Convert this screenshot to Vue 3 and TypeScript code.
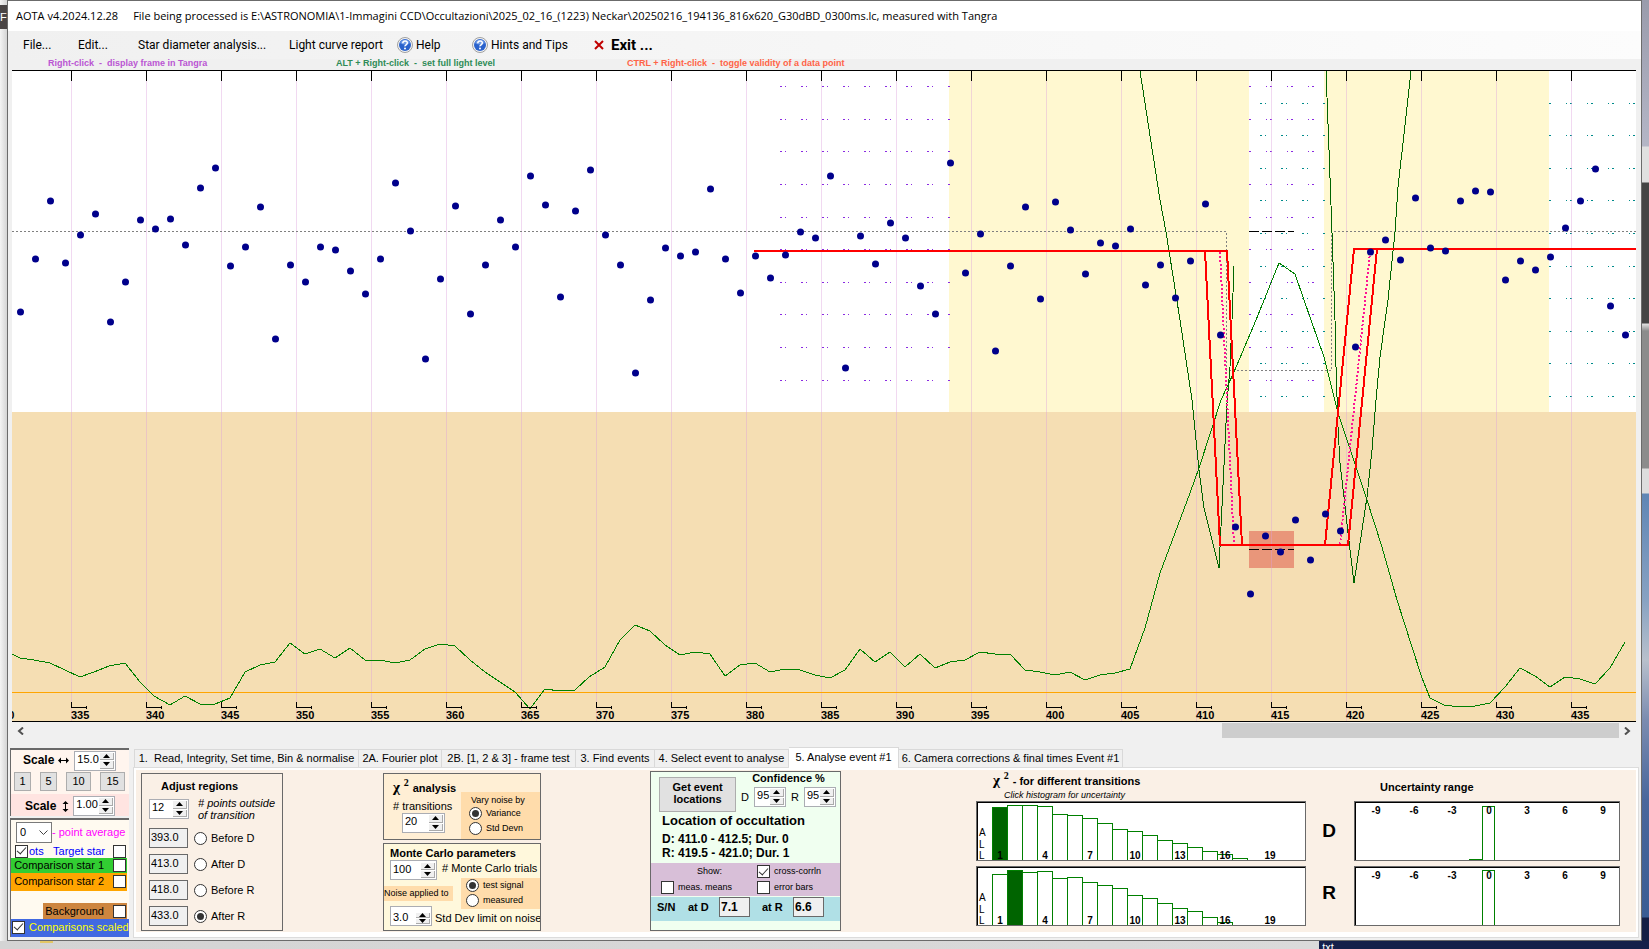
<script setup lang="ts">
import { h, ref } from 'vue'

const Spin = (props: { value: string; label: string }) =>
  h('span', { class: 'spin' }, [
    h('input', { type: 'text', value: props.value, 'aria-label': props.label }),
    h('span', { class: 'arrows' }, [
      h('button', { type: 'button', 'aria-label': props.label + ' up' }, [
        h('svg', { viewBox: '0 0 7 4', width: 7, height: 4 }, [h('path', { d: 'M0 4L3.5 0L7 4Z' })]),
      ]),
      h('button', { type: 'button', 'aria-label': props.label + ' down' }, [
        h('svg', { viewBox: '0 0 7 4', width: 7, height: 4 }, [h('path', { d: 'M0 0L3.5 4L7 0Z' })]),
      ]),
    ]),
  ])
Spin.props = ['value', 'label']

const pointHeights: number[] = [
  312, 259, 201, 263, 235, 214, 322, 282, 220, 229, 219, 245, 188, 168, 266, 247, 207, 339, 265, 282,
  247, 250, 271, 294, 259, 183, 231, 359, 279, 206, 314, 265, 220, 247, 176, 205, 297, 211, 170, 235,
  265, 373, 300, 248, 256, 252, 189, 259, 293, 256, 278, 255, 232, 238, 176, 368, 236, 264, 223, 238,
  286, 314, 163, 273, 234, 351, 266, 207, 299, 202, 230, 274, 243, 246, 229, 285, 265, 298, 261, 204,
  335, 527, 594, 536, 552, 520, 560, 514, 531, 347, 252, 240, 260, 198, 248, 251, 201, 191, 192, 280,
  261, 270, 257, 228, 201, 169, 306, 335,
]
const points = pointHeights.map((y, i) => ({ x: 20 + i * 15, y }))

const frames = Array.from({ length: 22 }, (_, i) => 330 + i * 5)
const frameX = (n: number) => 71 + (n - 335) * 15

const purpleRows = [86, 119, 151, 184, 217, 249, 282, 314, 347, 380]
const tealRows = [103, 135, 168, 200, 233, 266, 298, 331, 363, 396]

const correlation =
  '12,654 20,658 34,660 50,663 80,677 94,672 109,666 125,663 140,682 154,696 170,705 185,696 200,704 215,704 230,698 245,672 260,665 275,662 290,643 305,654 320,649 335,658 350,648 365,660 380,660 395,663 410,660 425,649 440,644 455,646 470,660 485,672 500,682 515,692 530,709 545,689 560,691 575,690 589,677 605,667 620,640 635,625 650,631 665,645 680,655 695,652 710,654 725,676 740,665 755,663 770,672 785,669 800,670 815,675 830,678 845,670 860,649 875,662 890,652 905,667 920,654 935,668 950,662 965,660 980,652 995,654 1010,654 1025,670 1040,672 1055,675 1070,672 1085,680 1100,675 1115,673 1130,669 1145,628 1160,573 1175,533 1190,493 1199,468 1212,428 1221,400 1234,372 1256,320 1279,263 1295,274 1311,320 1324,357 1338,413 1348,443 1366,497 1382,547 1397,600 1412,647 1422,678 1430,698 1444,705 1460,707 1475,706 1490,703 1505,687 1520,668 1535,676 1550,687 1565,677 1580,679 1595,684 1610,668 1625,642'
const dropCurve = '1140,71 1160,200 1166,232 1180,320 1192,400 1199,470 1204,508 1219,568 1227,403 1230,367 1232,320 1234,266'
const riseCurve =
  '1326,71 1329,150 1332,233 1335,320 1336,367 1338,427 1340,463 1344,497 1348,533 1354,583 1367,497 1372,450 1376,400 1380,357 1388,300 1395,232 1398,187 1403,143 1411,71'

interface Hist { name: string; filled: number; bars: number[] }
const hists: Hist[] = [
  { name: 'D', filled: 0, bars: [53, 55, 55, 54, 46, 45, 42, 37, 31, 29, 25, 20, 17, 13, 9, 6, 2] },
  { name: 'R', filled: 1, bars: [51, 55, 53, 54, 47, 48, 43, 40, 37, 30, 27, 22, 17, 14, 8, 3] },
]
const transitionLabels = [1, 4, 7, 10, 13, 16, 19]
const rangeLabels = [-9, -6, -3, 0, 3, 6, 9]

const tabs = [
  { text: '1.  Read, Integrity, Set time, Bin & normalise', w: 225 },
  { text: '2A. Fourier plot', w: 83 },
  { text: '2B. [1, 2 & 3] - frame test', w: 134 },
  { text: '3. Find events', w: 79 },
  { text: '4. Select event to analyse', w: 134 },
  { text: '5. Analyse event #1', w: 110 },
  { text: '6. Camera corrections & final times Event #1', w: 224 },
]
const activeTab = ref(5)
const regions = [
  { v: '393.0', label: 'Before D' },
  { v: '413.0', label: 'After D' },
  { v: '418.0', label: 'Before R' },
  { v: '433.0', label: 'After R' },
]
const region = ref(3)
</script>

<template>
  <div class="desktop">
    <div class="behind left-edge"><span class="dark">F</span></div>
    <div class="behind right-edge"></div>
    <div class="behind bottom-edge"><i class="folder"></i><span>txt</span></div>
    <main class="window">
      <header class="title"><span>AOTA v4.2024.12.28</span><span>File being processed is E:\ASTRONOMIA\1-Immagini CCD\Occultazioni\2025_02_16_(1223) Neckar\20250216_194136_816x620_G30dBD_0300ms.lc, measured with Tangra</span></header>
      <nav class="menu">
        <button type="button" class="m-file">File...</button>
        <button type="button" class="m-edit">Edit...</button>
        <button type="button" class="m-star">Star diameter analysis...</button>
        <button type="button" class="m-report">Light curve report</button>
        <button v-for="item in ['Help', 'Hints and Tips']" :key="item" type="button" :class="item === 'Help' ? 'm-help' : 'm-hints'">
          <svg width="16" height="16" viewBox="0 0 16 16">
            <circle cx="8" cy="8" r="7.5" fill="#f4f4f4" stroke="#a0a0a0" />
            <circle cx="8" cy="8" r="6" fill="#2a62cc" />
            <path d="M3 6a5.4 5.4 0 0 1 10 0q-5 3-10 0z" fill="#6f9be6" />
            <path d="M5.8 6.2q0-2.2 2.3-2.2t2.2 2q0 1-1.2 1.8T8 9.4" fill="none" stroke="#fff" stroke-width="1.5" />
            <circle cx="8" cy="11.6" r="1" fill="#fff" />
          </svg>
          <span>{{ item }}</span>
        </button>
        <button type="button" class="m-exit">
          <svg width="10" height="10" viewBox="0 0 10 10"><path d="M1 1L9 9M9 1L1 9" stroke="#c00000" stroke-width="2" /></svg>
          <span>Exit ...</span>
        </button>
      </nav>
      <div class="hints">
        <span class="h1">Right-click&nbsp; -&nbsp; display frame in Tangra</span>
        <span class="h2">ALT + Right-click&nbsp; -&nbsp; set full light level</span>
        <span class="h3">CTRL + Right-click&nbsp; -&nbsp; toggle validity of a data point</span>
      </div>

      <svg class="chart" viewBox="12 70 1624 652" shape-rendering="crispEdges">
        <rect x="12" y="70" width="1624" height="652" fill="#fff" />
        <rect x="949" y="71" width="300" height="341" fill="#fff8d0" />
        <rect x="1324" y="71" width="225" height="341" fill="#fff8d0" />
        <rect x="12" y="412" width="1624" height="310" fill="#f5deb3" />
        <rect x="1249" y="531" width="45" height="37" fill="#e9967a" />
        <g fill="none" stroke-width="1">
          <g stroke="#8a2be2">
            <template v-for="y in purpleRows" :key="y">
              <path :d="`M780 ${y}.5H951`" stroke-dasharray="2 3 1 15" />
              <path :d="`M1249 ${y}.5H1322`" stroke-dasharray="2 15 1 3" />
            </template>
          </g>
          <g stroke="#008b8b">
            <template v-for="y in tealRows" :key="y">
              <path :d="`M1260 ${y}.5H1326`" stroke-dasharray="2 3 1 15" />
              <path :d="`M1549 ${y}.5H1636`" stroke-dasharray="2 15 1 3" />
            </template>
          </g>
          <path v-for="n in frames" :key="n" :d="`M${frameX(n)}.5 81V722`" stroke="#dda0dd" stroke-opacity="0.4" />
          <path d="M12 692.5H1636" stroke="#ffa500" />
          <path d="M12 231.5H1226.5V370.5H1331.5V231.5H1636" stroke="#808080" stroke-dasharray="2 2" />
          <polyline :points="correlation" stroke="#008000" />
          <polyline :points="dropCurve" stroke="#006400" />
          <polyline :points="riseCurve" stroke="#006400" />
          <path d="M1249 231.5H1294M1249 549.5H1294" stroke="#000" stroke-dasharray="10 3" />
        </g>
        <g fill="none" stroke-width="2">
          <path d="M1220 252L1234 545M1370 252L1340 545" stroke="#ff1493" stroke-dasharray="2 2" />
          <path d="M754 251H1227L1242 545M1205 251L1220 545H1348L1377 249M1325 545L1354 249H1636" stroke="#f00" />
        </g>
        <circle v-for="p in points" :key="p.x" :cx="p.x + 0.5" :cy="p.y" r="3.5" fill="#00008b" shape-rendering="auto" />
        <path d="M12 70.5H1636M12 721.5H1636" stroke="#000" />
        <g v-for="n in frames" :key="n">
          <path :d="`M${frameX(n)}.5 70V81M${frameX(n)}.5 702V708M${frameX(n)} 707.5h15M${frameX(n) + 15}.5 706v3`" stroke="#000" fill="none" />
          <text :x="frameX(n)" y="719">{{ n }}</text>
        </g>
      </svg>

      <div class="scroll">
        <button type="button" aria-label="Scroll left"><svg width="7" height="8" viewBox="0 0 7 8"><path d="M6 0.500L2 4L6 7.500" /></svg></button>
        <div class="track"><div class="thumb"></div></div>
        <button type="button" aria-label="Scroll right"><svg width="7" height="8" viewBox="0 0 7 8"><path d="M1 0.500L5 4L1 7.500" /></svg></button>
      </div>

      <section class="lower">
        <aside>
          <div class="panel scale">
            <div class="srow"><b>Scale</b>
              <svg width="11" height="7" viewBox="0 0 11 7"><path d="M0 3.500L3 0.500V3H8V0.500L11 3.500L8 6.500V4H3V6.500Z" /></svg>
              <Spin class="w42" value="15.0" label="Horizontal scale" />
            </div>
            <div class="presets">
              <button type="button">1</button><button type="button">5</button><button type="button" class="wide">10</button><button type="button" class="wide">15</button>
            </div>
            <div class="srow rose"><b>Scale</b>
              <svg width="7" height="11" viewBox="0 0 7 11"><path d="M3.500 0L6.500 3H4V8H6.500L3.500 11L0.500 8H3V3H0.500Z" /></svg>
              <Spin class="w42" value="1.00" label="Vertical scale" />
            </div>
          </div>
          <div class="panel stars">
            <div class="avg">
              <span class="pick"><select id="avg"><option>0</option></select><svg width="9" height="6" viewBox="0 0 9 6"><path d="M0.500 0.500L4.500 4.500L8.500 0.500" fill="none" stroke="#444" /></svg></span>
              <label for="avg">- point average</label>
            </div>
            <div class="target"><label class="dots"><input type="checkbox" checked /><span>ots</span></label><label class="tgt">Target star<input type="checkbox" /></label></div>
            <label class="comp green">Comparison star 1<input type="checkbox" /></label>
            <label class="comp orange">Comparison star 2<input type="checkbox" /></label>
            <label class="comp bg">Background<input type="checkbox" /></label>
            <label class="scaled"><input type="checkbox" checked /><span>Comparisons scaled</span></label>
          </div>
        </aside>

        <div class="tabbed">
          <div class="tabs" role="tablist">
            <button v-for="(t, i) in tabs" :key="i" type="button" role="tab" :class="{ active: i === activeTab }" :style="{ width: t.w + 'px' }" @click="activeTab = i">{{ t.text }}</button>
          </div>
          <div class="page">
            <fieldset class="box adjust">
              <h3>Adjust regions</h3>
              <div class="outside"><Spin class="w40" value="12" label="Points outside of transition" /><i># points outside<br />of transition</i></div>
              <div v-for="(r, i) in regions" :key="i" class="reg">
                <input type="text" :value="r.v" :aria-label="r.label + ' frame'" />
                <label><input v-model="region" type="radio" name="region" :value="i" />{{ r.label }}</label>
              </div>
            </fieldset>

            <div class="col2">
              <div class="box chi">
                <div class="chi-left">
                  <h3><span class="chi-sym">χ <sup>2</sup></span>analysis</h3>
                  <span class="tr"># transitions</span>
                  <Spin class="w43" value="20" label="Transitions" />
                </div>
                <div class="vary">
                  <span>Vary noise by</span>
                  <label><input type="radio" name="vary" checked />Variance</label>
                  <label><input type="radio" name="vary" />Std Devn</label>
                </div>
              </div>
              <div class="box monte">
                <h3>Monte Carlo parameters</h3>
                <div class="trials"><Spin class="w47" value="100" label="Monte Carlo trials" /><span># Monte Carlo trials</span></div>
                <div class="noise">
                  <span class="applied">Noise applied to</span>
                  <div class="sig"><label><input type="radio" name="noise" checked />test signal</label><label><input type="radio" name="noise" />measured</label></div>
                </div>
                <div class="limit"><Spin class="w42" value="3.0" label="Std Dev limit on noise" /><span>Std Dev limit on noise</span></div>
              </div>
            </div>

            <div class="box loc">
              <div class="loc-top">
                <button type="button">Get event<br />locations</button>
                <div class="conf"><b>Confidence %</b>
                  <div><span>D</span><Spin class="w31" value="95" label="Confidence D" /><span>R</span><Spin class="w31" value="95" label="Confidence R" /></div>
                </div>
              </div>
              <h2>Location of occultation</h2>
              <p>D: 411.0 - 412.5; Dur. 0</p>
              <p class="cut">R: 419.5 - 421.0; Dur. 1</p>
              <div class="show">
                <span class="lbl">Show:</span><label><input type="checkbox" checked />cross-corrln</label>
                <label><input type="checkbox" />meas. means</label><label><input type="checkbox" />error bars</label>
              </div>
              <div class="sn"><b>S/N</b><label for="snd">at D</label><input id="snd" type="text" value="7.1" /><label for="snr">at R</label><input id="snr" type="text" value="6.6" /></div>
            </div>

            <div class="col4">
              <h3><span class="chi-sym">χ <sup>2</sup></span>- for different transitions</h3>
              <i>Click histogram for uncertainty</i>
              <svg v-for="hst in hists" :key="hst.name" class="plot" viewBox="0 0 330 60" shape-rendering="crispEdges">
                <rect width="330" height="60" fill="#696969" /><rect x="1" y="1" width="328" height="58" fill="#000" /><rect x="2" y="2" width="327" height="57" fill="#fff" />
                <rect v-for="(b, i) in hst.bars" :key="i" :x="16.5 + i * 15" :y="59.5 - b" width="15" :height="b" :fill="i === hst.filled ? '#006400' : '#fff'" stroke="#008000" />
                <rect x="1" y="59" width="328" height="1" fill="#696969" />
                <text v-for="(n, i) in transitionLabels" :key="n" :x="24 + i * 45" y="58" text-anchor="middle">{{ n }}</text>
                <text x="3" y="35" class="thin">A</text><text x="3" y="47" class="thin">L</text><text x="3" y="58" class="thin">L</text>
              </svg>
            </div>
            <div class="letters"><b>D</b><b>R</b></div>
            <div class="col5">
              <h3>Uncertainty range</h3>
              <svg v-for="hst in hists" :key="hst.name" class="plot" viewBox="0 0 266 60" shape-rendering="crispEdges">
                <rect width="266" height="60" fill="#696969" /><rect x="1" y="1" width="264" height="58" fill="#000" /><rect x="2" y="2" width="263" height="57" fill="#fff" />
                <path :d="hst.name === 'D' ? 'M128.5 59V5.500H140.500V59M115 58.500H128' : 'M128.500 59V4.500H140.500V59'" fill="none" stroke="#008000" />
                <text v-for="(n, i) in rangeLabels" :key="n" :x="22 + i * 38 - (i > 2 ? 1 : 0)" y="13" text-anchor="middle">{{ n }}</text>
              </svg>
            </div>
          </div>
        </div>
      </section>
    </main>
  </div>
</template>

<style>
html, body { margin: 0; background: #f0f0f0; }
</style>

<style scoped>
* { box-sizing: border-box; }
.desktop { position: relative; min-height: 100vh; padding: 0 7px 7px; overflow: hidden; font: 11px/13px "Liberation Sans", Arial, sans-serif; color: #000; background: #f0f0f0; }
button, input, select { font: inherit; color: inherit; margin: 0; padding: 0; border: 0; background: none; }
h2, h3, p, fieldset { margin: 0; padding: 0; border: 0; min-width: 0; }
h3 { font-size: 11px; line-height: 13px; white-space: nowrap; }
.behind { position: absolute; }
.left-edge { left: 0; top: 0; width: 7px; height: 100%; background: linear-gradient(90deg, #f4f4f4, #d4d4d4); }
.dark { display: block; margin-top: 5px; height: 24px; line-height: 24px; background: #4a4545; color: #fff; overflow: hidden; }
.right-edge { right: 0; top: 0; width: 7px; height: 100%; background: linear-gradient(180deg, #9a9cac 0, #b4b6c6 146px, #e0e0e0 147px, #e0e0e0 182px, #454545 183px, #454545 323px, #e0e0e0 324px, #8c8c8c 331px, #8c8c8c 468px, #ddd 469px, #ddd 493px, #5f86b5 494px, #88a2c2 600px, #b8c0cc 660px, #7b8cb0 720px, #4a679c 800px, #3a5d94 917px, #141f45 918px); }
.bottom-edge { left: 0; right: 0; bottom: 0; height: 8px; background: linear-gradient(90deg, #d4d4d4 0, #dadada 80%, #15204a 80%); overflow: hidden; }
.bottom-edge span { display: block; margin-left: 80%; padding-left: 3px; line-height: 13px; color: #fff; }
.folder { float: left; width: 13px; height: 2px; margin-left: 40px; background: #e3c766; }
.window { position: relative; border: 1px solid #6b6b6b; background: #f0f0f0; padding-bottom: 2px; }
.title { height: 30px; line-height: 30px; padding-left: 8px; background: #fff; font-family: "Open Sans", sans-serif; font-size: 11px; display: flex; gap: 15px; white-space: pre; }
.menu { height: 28px; background: linear-gradient(90deg, #f0f0f0, #fcfcfc); display: flex; align-items: center; font-family: Roboto, sans-serif; font-size: 12px; white-space: nowrap; }
.menu button { text-align: left; display: flex; align-items: center; gap: 3px; }
.m-file { margin-left: 15px; width: 55px; } .m-edit { width: 60px; } .m-star { width: 151px; } .m-report { width: 108px; } .m-help { width: 75px; } .m-hints { width: 122px; }
.menu .m-exit { font-size: 15px; font-weight: bold; gap: 7px; }
.hints { height: 11px; display: flex; font-size: 9px; line-height: 9px; font-weight: bold; white-space: nowrap; }
.h1 { color: #ba55d3; margin-left: 40px; width: 288px; } .h2 { color: #2e8b57; width: 291px; } .h3 { color: #ff6347; }
.chart { display: block; margin-left: 4px; width: calc(100% - 9px); height: auto; }
.chart text, .plot text { font: bold 11px "Liberation Sans", Arial, sans-serif; }
.plot text { font-size: 10px; } .plot .thin { font-weight: normal; }
.scroll { display: flex; height: 16px; margin: 1px 5px 0 4px; }
.scroll button { width: 17px; display: grid; place-items: center; }
.scroll path { fill: none; stroke: #505050; stroke-width: 2; }
.track { flex: 1; } .thumb { width: 25%; height: 15px; margin-left: auto; background: #cdcdcd; }
.lower { display: flex; margin-top: 8px; padding: 0 2px; gap: 4px; }
aside { width: 119px; flex: none; padding-top: 1px; }
.panel { border-top: 2px solid #696969; border-left: 1px solid #696969; overflow: hidden; }
.scale { height: 68px; background: #fff5ee; }
.srow { display: flex; align-items: center; height: 21px; padding-left: 12px; font-size: 12px; }
.srow svg { flex: none; margin: 0 5px 0 4px; } .srow.rose { height: 24px; background: #ffe4e1; padding-left: 14px; }
.srow.rose svg { margin: 0 4px 0 6px; }
.presets { display: flex; justify-content: space-between; padding: 1px 4px 3px 3px; height: 23px; }
.presets button { width: 17px; background: #e1e1e1; border: 1px solid #adadad; } .presets .wide { width: 25px; }
.spin { display: inline-flex; flex: none; height: 20px; border: 1px solid #abadb3; background: #fff; padding: 1px; font-size: 11px; font-weight: normal; }
.spin :deep(input) { flex: 1; width: 0; padding: 0 0 3px 1px; font: inherit; border: 0; outline: 0; background: none; color: #000; }
.spin :deep(.arrows) { width: 14px; display: flex; flex-direction: column; gap: 1px; }
.spin :deep(button) { flex: 1; min-height: 0; padding: 0; display: grid; place-items: center; background: #f0f0f0; border: 0; border-right: 1px solid #aaa; border-bottom: 1px solid #aaa; }
.spin :deep(svg) { display: block; margin: 0; }
.w31 { width: 32px; } .w40 { width: 40px; } .w42 { width: 42px; } .w43 { width: 43px; } .w47 { width: 47px; }
input[type=checkbox] { appearance: none; width: 13px; height: 13px; border: 1px solid #333; background: #fff; display: grid; place-items: center; flex: none; }
input[type=checkbox]:checked::after { content: ""; width: 4px; height: 8px; border: solid #333; border-width: 0 1px 1px 0; transform: rotate(42deg); margin-top: -3px; }
input[type=radio] { appearance: none; width: 13px; height: 13px; border: 1px solid #333; border-radius: 50%; background: #fff; display: grid; place-items: center; flex: none; }
input[type=radio]:checked::after { content: ""; width: 7px; height: 7px; border-radius: 50%; background: #333; }
.stars { height: 119px; margin-top: 2px; background: #fffaf0; display: flex; flex-direction: column; }
.avg { display: flex; align-items: center; height: 24px; padding: 1px 0 0 5px; color: #f0f; white-space: nowrap; }
.pick { display: grid; width: 36px; height: 21px; align-items: center; }
.pick > * { grid-area: 1 / 1; } .pick svg { justify-self: end; margin-right: 4px; pointer-events: none; }
.avg select { appearance: none; width: 36px; height: 21px; border: 1px solid #7a7a7a; background: #fff; color: #000; padding-left: 3px; }
.target { display: flex; align-items: center; justify-content: space-between; height: 14px; color: #00f; padding-right: 3px; padding-left: 4px; }
.target label, .comp, .scaled { display: flex; align-items: center; white-space: nowrap; } .dots { gap: 1px; } .tgt { gap: 8px; }
.comp { justify-content: flex-end; gap: 9px; margin-right: 2px; height: 15px; }
.stars .comp { padding-right: 1px; }
.green { background: #32cd32; } .orange { background: #ffa500; height: 18px; padding-bottom: 2px; }
.bg { background: #cd853f; height: 16px; width: 84px; margin-top: 12px; align-self: flex-end; }
.scaled { height: 18px; background: #4169e1; color: #ff0; gap: 4px; padding: 0 0 2px 1px; }
.tabbed { flex: 1; min-width: 0; }
.tabs { display: flex; align-items: flex-end; height: 20px; padding-left: 1px; }
.tabs button { height: 18px; border: 1px solid #d9d9d9; border-bottom: 0; border-left-width: 0; white-space: pre; text-align: center; flex: none; background: #f0f0f0; }
.tabs button:first-child { border-left-width: 1px; }
.tabs .active { height: 21px; margin-bottom: -1px; background: #fff; position: relative; padding-bottom: 2px; }
.page { height: 171px; border: 1px solid #dcdcdc; display: flex; align-items: flex-start; background: linear-gradient(#faf0e6, #faf0e6) 2px 2px / calc(100% - 4px) 162px no-repeat #fff; }
.box { border: 1px solid #696969; }
.adjust { width: 142px; height: 158px; margin: 5px 0 0 7px; flex: none; padding: 6px 0 0 7px; }
.adjust h3 { padding-left: 12px; }
.outside { display: flex; gap: 9px; margin: 6px 0 9px; white-space: nowrap; height: 20px; } .outside i { line-height: 12px; margin-top: -2px; }
.reg { display: flex; align-items: center; gap: 6px; height: 20px; margin-bottom: 6px; }
.reg input[type=text] { width: 39px; height: 20px; border: 1px solid #696969; background: #f0f0f0; padding: 0 0 3px 1px; }
.reg label { display: flex; align-items: center; gap: 4px; }
.col2 { width: 158px; margin: 5px 0 0 100px; flex: none; }
.chi { height: 67px; background: #ffefd5; display: flex; justify-content: space-between; }
.chi-left { padding-left: 9px; display: flex; flex-direction: column; width: 76px; }
.chi h3 { padding-top: 4px; height: 26px; line-height: 18px; }
.chi-sym { font: bold 15px/18px "Liberation Serif", serif; margin-right: 4px; } sup { font-size: 10px; line-height: 0; }
.tr { white-space: nowrap; } .chi .spin { margin-left: 9px; }
.vary, .sig { width: 79px; background: #ffdcab; font-size: 9px; line-height: 11px; }
.vary { margin-top: 18px; padding: 3px 0 0 8px; } .vary span { padding-left: 2px; display: block; }
.vary label, .sig label { display: flex; align-items: center; gap: 4px; height: 15px; }
.monte { height: 88px; margin-top: 3px; background: #fff8dc; padding-top: 3px; overflow: hidden; }
.monte h3 { padding-left: 6px; } .trials, .limit { display: flex; padding-left: 6px; gap: 5px; white-space: nowrap; height: 20px; } .trials { height: 18px; } .trials span { padding-top: 2px; }
.noise { display: flex; justify-content: space-between; align-items: center; height: 31px; font-size: 9px; }
.applied { background: #ffdcab; width: 69px; line-height: 15px; white-space: nowrap; } .sig { height: 31px; padding-left: 5px; }
.limit { position: relative; margin-top: -3px; gap: 3px; } .limit span { padding-top: 6px; }
.limit .spin :deep(span) { padding-top: 0; }
.loc { width: 191px; height: 160px; margin: 3px 0 0 109px; background: #f0fff0; flex: none; white-space: nowrap; }
.loc-top { display: flex; gap: 5px; padding: 0 4px 0 8px; height: 41px; }
.loc-top > button { width: 78px; height: 35px; margin-top: 5px; padding-bottom: 4px; background: #e1e1e1; border: 1px solid #adadad; font-weight: bold; line-height: 12px; }
.conf b { display: block; text-align: center; } .conf div { display: flex; gap: 5px; align-items: center; margin-top: 2px; }
h2 { font-size: 13px; line-height: 16px; padding-left: 11px; }
.loc p { font-size: 12px; font-weight: bold; line-height: 14px; padding-left: 11px; margin-top: 3px; }
.loc .cut { line-height: 13px; margin-top: 1px; margin-bottom: 3px; }
.show { height: 33px; background: #d8bfd8; display: grid; grid-template-columns: 96px 1fr; align-content: space-evenly; font-size: 9px; padding-left: 10px; }
.show label { display: flex; align-items: center; gap: 4px; } .show .lbl { padding-left: 36px; }
.sn { height: 24px; margin-top: 1px; background: #b0e0e6; display: flex; align-items: center; font-weight: bold; padding: 0 0 4px 6px; }
.sn b, .sn label { flex: none; width: 31px; } .sn input { flex: none; width: 31px; height: 20px; border: 1px solid #696969; background: #f0f0f0; padding-left: 1px; margin-right: 12px; font-size: 12px; }
.sn input:last-child { margin-right: 0; }
.col4 { width: 330px; margin-left: 135px; flex: none; display: flex; flex-direction: column; }
.col4 h3 { padding: 3px 0 0 17px; height: 22px; line-height: 18px; } .col4 i { padding-left: 28px; font-size: 9px; line-height: 11px; }
.plot { display: block; width: 100%; height: auto; margin-bottom: 5px; }
.letters { width: 48px; flex: none; font-size: 19px; line-height: 20px; text-align: center; padding: 53px 10px 0 0; } .letters b { display: block; height: 62px; padding-left: 8px; }
.col5 { width: 266px; flex: none; } .col5 h3 { padding: 13px 0 7px 26px; }
</style>
